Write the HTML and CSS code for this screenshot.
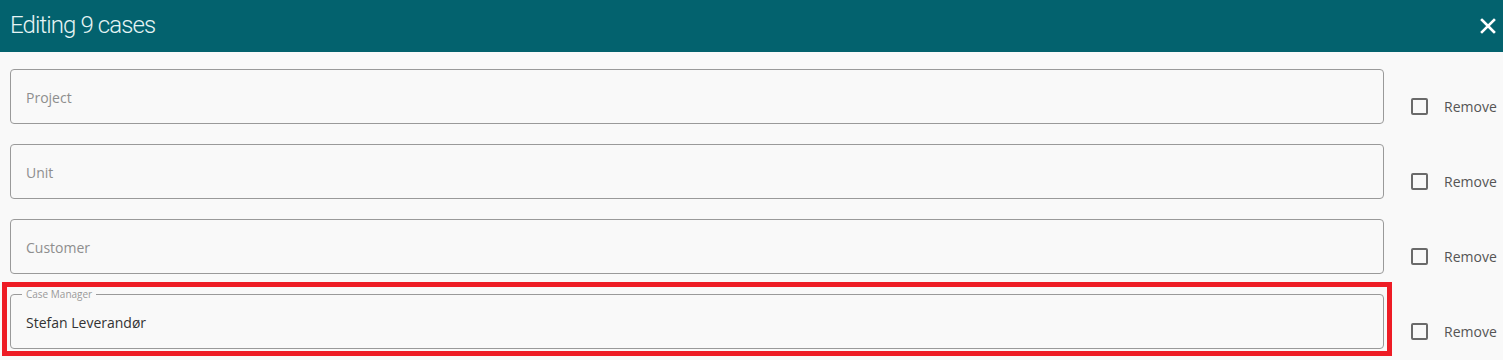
FILE: index.html
```html
<!DOCTYPE html>
<html lang="en">
<head>
<meta charset="utf-8">
<title>Editing 9 cases</title>
<link rel="stylesheet" href="styles.css">
</head>
<body>
<header class="dialog-header">
  <h1 class="dialog-title">Editing 9 cases</h1>
  <button class="close-btn" aria-label="Close">
    <svg width="16" height="16" viewBox="0 0 16 16"><path d="M2 2 L14 14 M14 2 L2 14" stroke="#fff" stroke-width="2.6" stroke-linecap="square"/></svg>
  </button>
</header>
<main class="rows">
  <div class="row">
    <div class="field"><span class="placeholder">Project</span></div>
    <label class="remove"><span class="box"></span><span class="remove-text">Remove</span></label>
  </div>
  <div class="row">
    <div class="field"><span class="placeholder">Unit</span></div>
    <label class="remove"><span class="box"></span><span class="remove-text">Remove</span></label>
  </div>
  <div class="row">
    <div class="field"><span class="placeholder">Customer</span></div>
    <label class="remove"><span class="box"></span><span class="remove-text">Remove</span></label>
  </div>
  <div class="row">
    <div class="field field-filled highlight">
      <span class="float-label">Case Manager</span>
      <span class="value">Stefan Leverandør</span>
    </div>
    <label class="remove"><span class="box"></span><span class="remove-text">Remove</span></label>
  </div>
</main>
</body>
</html>
```

FILE: styles.css
```css
* { box-sizing: border-box; }
html, body { margin: 0; padding: 0; }
body {
  background: #f9f9f9;
  font-family: "Open Sans", "Liberation Sans", sans-serif;
  width: 1503px;
  height: 360px;
  overflow: hidden;
}
.dialog-header {
  height: 52px;
  background: #03626e;
  display: flex;
  align-items: center;
  justify-content: space-between;
  padding: 0 6px 0 10px;
}
.dialog-title {
  margin: 0;
  font-family: Roboto, "Open Sans", sans-serif;
  font-weight: 300;
  font-size: 24px;
  letter-spacing: -0.9px;
  color: #e6f4f4;
  padding-bottom: 2px;
}
.close-btn {
  background: none;
  border: 0;
  padding: 0;
  width: 18px;
  height: 18px;
  display: flex;
  align-items: center;
  justify-content: center;
  cursor: pointer;
}
.rows {
  padding: 17px 0 0 10px;
  display: flex;
  flex-direction: column;
  gap: 19px;
}
.row {
  display: flex;
  align-items: flex-start;
  height: 56px;
}
.field {
  position: relative;
  width: 1374px;
  height: 55px;
  border: 1px solid #9a9a9a;
  border-radius: 4px;
  display: flex;
  align-items: center;
  padding: 0 15px;
  flex: none;
}
.placeholder {
  font-size: 14px;
  color: #8e8e8e;
  padding-top: 2px;
}
.float-label {
  position: absolute;
  top: -8px;
  left: 11px;
  padding: 0 4px;
  background: #f9f9f9;
  font-size: 10px;
  color: #9a9a9a;
  line-height: 14px;
}
.value {
  font-size: 14px;
  color: #333;
  padding-top: 2px;
}
.highlight::after {
  content: "";
  position: absolute;
  top: -13px;
  left: -9px;
  right: -9px;
  bottom: -8px;
  border: 5px solid #ee1c25;
  pointer-events: none;
}
.remove {
  display: flex;
  align-items: center;
  margin-left: 27px;
  margin-top: 28px;
  cursor: pointer;
}
.box {
  width: 17px;
  height: 17px;
  border: 2px solid #6a6a6a;
  border-radius: 2px;
  flex: none;
}
.remove-text {
  margin-left: 16px;
  font-size: 14px;
  color: #555;
  line-height: 19px;
}
```
